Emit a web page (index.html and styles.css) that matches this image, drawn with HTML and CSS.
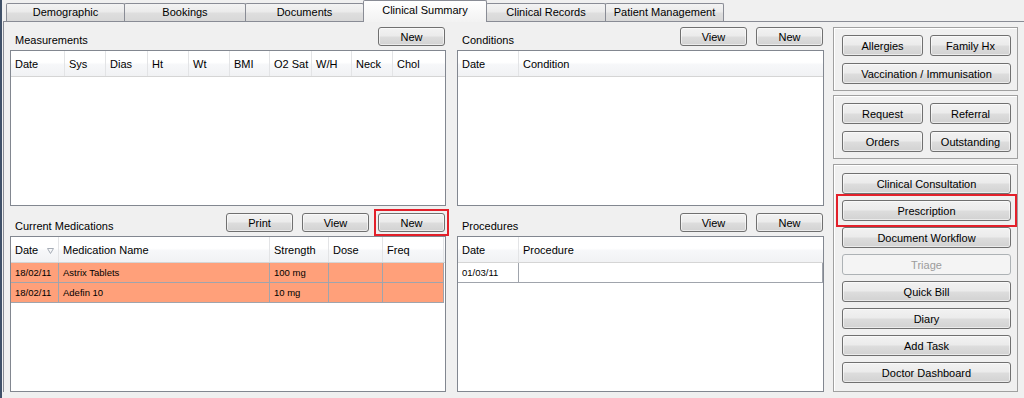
FILE: index.html
```html
<!DOCTYPE html>
<html lang="en">
<head>
  <meta charset="UTF-8">
  <title>Clinical Summary</title>
  <link rel="stylesheet" href="styles.css">
</head>
<body>
  <div class="window">
    <div class="tabs">
      <div class="tab tab-demo">Demographic</div>
      <div class="tab tab-book">Bookings</div>
      <div class="tab tab-docs">Documents</div>
      <div class="tab tab-sum active">Clinical Summary</div>
      <div class="tab tab-rec">Clinical Records</div>
      <div class="tab tab-pm">Patient Management</div>
    </div>

    <div class="tabpage">
      <!-- left column -->
      <div class="col-left">
        <div class="section-head">
          <span class="section-title">Measurements</span>
          <button class="btn">New</button>
        </div>
        <div class="grid">
          <div class="grid-head meas-cols">
            <span>Date</span><span>Sys</span><span>Dias</span><span>Ht</span><span>Wt</span>
            <span>BMI</span><span>O2 Sat</span><span>W/H</span><span>Neck</span><span class="last">Chol</span>
          </div>
        </div>

        <div class="section-head second">
          <span class="section-title">Current Medications</span>
          <button class="btn">Print</button>
          <button class="btn">View</button>
          <div class="mark"><button class="btn">New</button></div>
        </div>
        <div class="grid">
          <div class="grid-head med-cols">
            <span class="sorted">Date
              <svg width="7" height="6" viewBox="0 0 7 6"><polygon points="0.5,0.5 6.5,0.5 3.5,5.5" fill="none" stroke="#a7adb6"/></svg>
            </span>
            <span>Medication Name</span><span>Strength</span><span>Dose</span><span>Freq</span><span class="last"></span>
          </div>
          <div class="grid-row med-cols med">
            <span>18/02/11</span><span>Astrix Tablets</span><span>100 mg</span><span></span><span></span>
          </div>
          <div class="grid-row med-cols med">
            <span>18/02/11</span><span>Adefin 10</span><span>10 mg</span><span></span><span></span>
          </div>
        </div>
      </div>

      <!-- middle column -->
      <div class="col-mid">
        <div class="section-head">
          <span class="section-title">Conditions</span>
          <button class="btn">View</button>
          <button class="btn">New</button>
        </div>
        <div class="grid">
          <div class="grid-head two-cols">
            <span>Date</span><span class="last">Condition</span>
          </div>
        </div>

        <div class="section-head second">
          <span class="section-title">Procedures</span>
          <button class="btn">View</button>
          <button class="btn">New</button>
        </div>
        <div class="grid">
          <div class="grid-head two-cols">
            <span>Date</span><span class="last">Procedure</span>
          </div>
          <div class="grid-row two-cols plain">
            <span>01/03/11</span><span></span>
          </div>
        </div>
      </div>

      <!-- right column -->
      <div class="col-right">
        <div class="group pair">
          <button class="btn big">Allergies</button>
          <button class="btn big">Family Hx</button>
          <button class="btn big wide">Vaccination / Immunisation</button>
        </div>
        <div class="group pair g2">
          <button class="btn big">Request</button>
          <button class="btn big">Referral</button>
          <button class="btn big">Orders</button>
          <button class="btn big">Outstanding</button>
        </div>
        <div class="group stack">
          <button class="btn big">Clinical Consultation</button>
          <div class="mark wide-mark"><button class="btn big">Prescription</button></div>
          <button class="btn big">Document Workflow</button>
          <button class="btn big" disabled>Triage</button>
          <button class="btn big">Quick Bill</button>
          <button class="btn big">Diary</button>
          <button class="btn big">Add Task</button>
          <button class="btn big">Doctor Dashboard</button>
        </div>
      </div>
    </div>
  </div>
</body>
</html>
```

FILE: styles.css
```css
body {
  margin: 0;
  background: #f0f0f0;
  font-family: "Liberation Sans", Arial, sans-serif;
  font-size: 11px;
  color: #000;
}
.window {
  height: 398px;
  box-sizing: border-box;
  border-left: 2px solid #3f5068;
  padding-left: 1px;
}

/* tab strip */
.tabs {
  display: flex;
  align-items: flex-end;
  height: 21px;
  padding-left: 3px;
}
.tab {
  box-sizing: border-box;
  height: 18px;
  line-height: 17px;
  margin-right: -1px;
  text-align: center;
  border: 1px solid #898c95;
  border-bottom: none;
  border-radius: 2px 2px 0 0;
  background: linear-gradient(#f3f3f3 0%, #ebebeb 45%, #dedede 55%, #d8d8d8 100%);
}
.tab-demo { width: 119px; }
.tab-book { width: 122px; }
.tab-docs { width: 119px; }
.tab-sum { width: 124px; }
.tab-rec { width: 120px; }
.tab-pm { width: 119px; }
.tab.active {
  position: relative;
  z-index: 2;
  height: 22px;
  line-height: 18px;
  margin-bottom: -1px;
  background: linear-gradient(#ffffff, #f2f2f2);
}

/* tab page */
.tabpage {
  display: flex;
  border-top: 1px solid #898c95;
  border-left: 1px solid #898c95;
  padding: 5px 0 0 6px;
}
.col-left {
  width: 436px;
  margin-right: 11px;
}
.col-mid {
  width: 367px;
  margin-right: 9px;
}
.col-right {
  width: 185px;
}

.section-head {
  display: flex;
  align-items: flex-start;
  gap: 9px;
  height: 23px;
  padding-right: 1px;
}
.section-head.second {
  margin-top: 7px;
}
.section-title {
  flex: 1;
  align-self: flex-end;
  margin: 0 0 4px 5px;
}

/* buttons */
.btn {
  box-sizing: border-box;
  width: 67px;
  height: 19px;
  padding: 0;
  font-family: "Liberation Sans", Arial, sans-serif;
  font-size: 11px;
  color: #000;
  border: 1px solid #707070;
  border-radius: 3px;
  background: linear-gradient(#f2f2f2 0%, #ebebeb 48%, #dddddd 52%, #d2d2d2 100%);
  box-shadow: inset 0 0 0 1px rgba(255,255,255,0.55);
}
.btn.big {
  width: auto;
  height: 21px;
}
.btn:disabled {
  color: #9c9c9c;
  border-color: #adb2b5;
  background: #f4f4f4;
  box-shadow: none;
}

/* red highlight frames */
.mark {
  display: flex;
  flex-direction: column;
  outline: 2px solid #e3202a;
  outline-offset: 2px;
}
.mark.wide-mark {
  outline-offset: 4px;
}

/* list grids */
.grid {
  box-sizing: border-box;
  height: 156px;
  border: 1px solid #828790;
  background: #fff;
  overflow: hidden;
}
.grid-head {
  display: grid;
  height: 26px;
  border-bottom: 1px solid #d5d5d5;
  box-sizing: border-box;
  background: linear-gradient(#ffffff 0%, #ffffff 45%, #f6f7f9 55%, #f1f2f4 100%);
}
.grid-head span {
  box-sizing: border-box;
  padding: 2px 0 0 4px;
  line-height: 23px;
  border-right: 1px solid #e3e4e6;
  white-space: nowrap;
}
.grid-head span.last {
  border-right: none;
}
.grid-head .sorted {
  display: flex;
  align-items: center;
  justify-content: space-between;
  padding-right: 4px;
}
.grid-row {
  display: grid;
  height: 20px;
}
.grid-row span {
  box-sizing: border-box;
  padding-left: 4px;
  font-size: 9.5px;
  line-height: 19px;
  border-right: 1px solid #a0a4ac;
  border-bottom: 1px solid #a0a4ac;
  white-space: nowrap;
}
.grid-row.med span {
  background: #ffa07a;
}
.grid-row.plain span {
  background: #fff;
}

.meas-cols {
  grid-template-columns: 54px 41px 42px 41px 41px 40px 42px 40px 41px 1fr;
}
.med-cols {
  grid-template-columns: 48px 211px 59px 54px 61px 1fr;
}
.grid-row.med-cols {
  grid-template-columns: 48px 211px 59px 54px 61px;
}
.two-cols {
  grid-template-columns: 61px 1fr;
}

/* right-hand button groups */
.group {
  box-sizing: border-box;
  border: 1px solid #a0a0a0;
  box-shadow: inset 1px 1px 0 #fff;
  padding: 7px 6px 6px 8px;
}
.pair {
  display: grid;
  grid-template-columns: 81px 81px;
  gap: 7px;
  height: 64px;
}
.pair .wide {
  grid-column: span 2;
}
.g2 {
  margin-top: 4px;
}
.stack {
  display: flex;
  flex-direction: column;
  gap: 6px;
  height: 228px;
  margin-top: 5px;
  padding-top: 8px;
}
```
